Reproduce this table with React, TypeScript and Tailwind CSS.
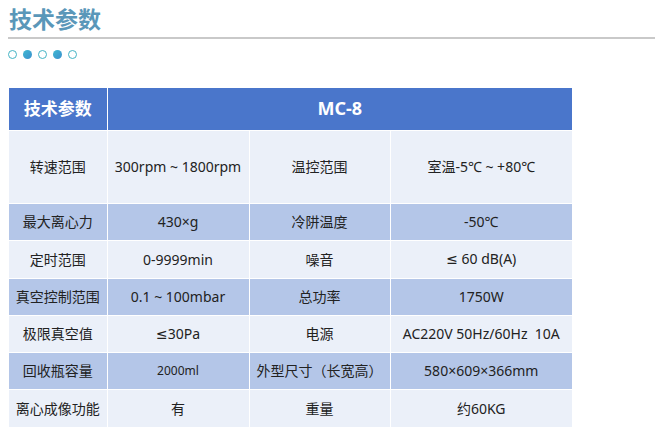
const rows: { cells: string[]; h: string; dark: boolean; small?: boolean }[] = [
  { cells: ["转速范围", "300rpm ~ 1800rpm", "温控范围", "室温-5℃ ~ +80℃"], h: "h-[73px]", dark: false },
  { cells: ["最大离心力", "430×g", "冷阱温度", "-50℃"], h: "h-[37px]", dark: true },
  { cells: ["定时范围", "0-9999min", "噪音", "≤ 60 dB(A)"], h: "h-[38px]", dark: false },
  { cells: ["真空控制范围", "0.1 ~ 100mbar", "总功率", "1750W"], h: "h-[37px]", dark: true },
  { cells: ["极限真空值", "≤30Pa", "电源", "AC220V 50Hz/60Hz  10A"], h: "h-[37px]", dark: false },
  { cells: ["回收瓶容量", "2000ml", "外型尺寸（长宽高）", "580×609×366mm"], h: "h-[37px]", dark: true, small: true },
  { cells: ["离心成像功能", "有", "重量", "约60KG"], h: "h-[38px]", dark: false },
];

// the CJK font draws ≤ slanted, so take it from DejaVu
const cellText = (s: string) =>
  s.startsWith("≤") ? (
    <>
      <span className="font-['DejaVu_Sans',sans-serif]">≤</span>
      {s.slice(1)}
    </>
  ) : (
    s
  );

const App = () => {
  return (
    <div className="h-[432px] w-[655px] overflow-hidden bg-white font-['Noto_Sans','Noto_Sans_CJK_SC',sans-serif] text-[#222]">
      {/* Title */}
      <div className="pl-[9px] pt-[3px]">
        <h1 className="text-[23px] font-bold leading-[32px] text-[#5a97b9]">技术参数</h1>
      </div>
      <div className="ml-[8px] mt-[2px] h-[2px] bg-[#c9c9c9]" />

      {/* Dots */}
      <div className="ml-[8px] mt-[11px] flex gap-[6px]">
        {[false, true, false, true, false].map((filled, i) => (
          <span
            key={i}
            className={`h-[9px] w-[9px] rounded-full ${
              filled ? "bg-gradient-to-br from-[#3fb8d0] to-[#3b8fce]" : "border-[1.5px] border-[#45b3c4]"
            }`}
          />
        ))}
      </div>

      {/* Spec table */}
      <table className="ml-[9px] mt-[29px] w-[563px] table-fixed border-collapse text-center text-[14px]">
        <colgroup>
          <col className="w-[98px]" />
          <col className="w-[142px]" />
          <col className="w-[141px]" />
          <col className="w-[182px]" />
        </colgroup>
        <thead>
          <tr className="h-[42px] bg-[#4a76cb] text-white">
            <th className="border border-white border-t-0 border-l-0 text-[17px] font-bold">技术参数</th>
            <th colSpan={3} className="border border-white border-t-0 border-r-0 text-[18px] font-bold">
              MC-8
            </th>
          </tr>
        </thead>
        <tbody>
          {rows.map((r, i) => (
            <tr key={i} className={`${r.h} ${r.dark ? "bg-[#b4c6e8]" : "bg-[#ebf0f9]"}`}>
              {r.cells.map((c, j) => (
                <td
                  key={j}
                  className={`border border-white whitespace-pre font-normal ${j === 0 ? "border-l-0" : ""} ${
                    j === 3 ? "border-r-0" : ""
                  } ${r.small && j === 1 ? "text-[12px]" : ""}`}
                >
                  {cellText(c)}
                </td>
              ))}
            </tr>
          ))}
        </tbody>
      </table>
    </div>
  );
};

export default App;
